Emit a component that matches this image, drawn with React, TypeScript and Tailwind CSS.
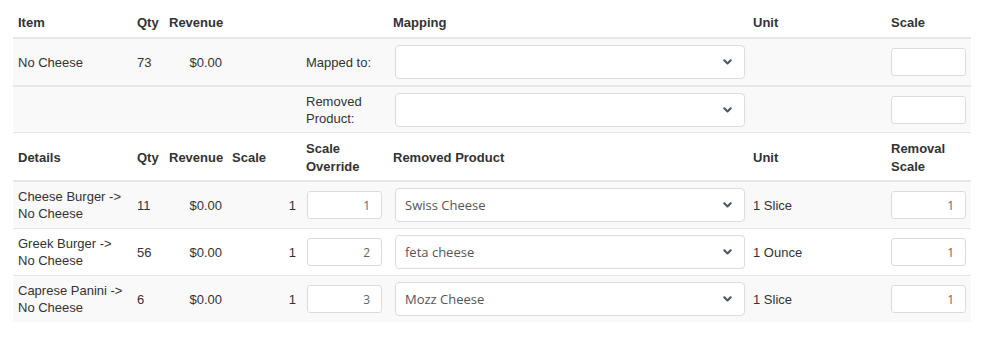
import React from "react";

const COLS = "grid grid-cols-[119px_32px_63px_74px_87px_360px_138px_85px]";

function Chevron() {
  return (
    <svg width="9" height="6" viewBox="0 0 9 6" className="absolute right-[12px] top-1/2 -translate-y-1/2">
      <path d="M1.3 1.3 L4.5 4.5 L7.7 1.3" fill="none" stroke="#4f5563" strokeWidth="2.1" strokeLinecap="round" strokeLinejoin="round" />
    </svg>
  );
}

function Select({ value }: { value?: string }) {
  return (
    <div className="relative ml-[7px] w-[350px] h-[34px] bg-white border border-[#dcdcdc] rounded-[4px] flex items-center pl-[9px] text-[13px] text-[#555] font-['Open_Sans',sans-serif]">
      {value ?? ""}
      <Chevron />
    </div>
  );
}

function NumInput({ value }: { value?: string }) {
  return (
    <div className="w-[75px] h-[28px] bg-white border border-[#dcdcdc] rounded-[3px] flex items-center justify-end pr-[11px] text-[12px] text-[#666] font-['Open_Sans',sans-serif]">
      {value ?? ""}
    </div>
  );
}

const rows = [
  { a: "Cheese Burger ->", qty: "11", ov: "1", prod: "Swiss Cheese", unit: "1 Slice", bg: "bg-[#f9f9f9]" },
  { a: "Greek Burger ->", qty: "56", ov: "2", prod: "feta cheese", unit: "1 Ounce", bg: "bg-white" },
  { a: "Caprese Panini ->", qty: "6", ov: "3", prod: "Mozz Cheese", unit: "1 Slice", bg: "bg-[#f9f9f9]" },
];

export default function App() {
  return (
    <div className="w-[983px] h-[342px] bg-white font-['Liberation_Sans',Arial,sans-serif] text-[13px] leading-[17px] text-[#333]">
      <div className="ml-[13px] w-[958px]">
        {/* Header 1 */}
        <div className={`${COLS} h-[39px] items-end pb-[6px] border-b-2 border-[#e4e7eb] font-bold`}>
          <div className="pl-[5px]">Item</div>
          <div className="pl-[5px]">Qty</div>
          <div className="pl-[5px]">Revenue</div>
          <div />
          <div />
          <div className="pl-[5px]">Mapping</div>
          <div className="pl-[5px]">Unit</div>
          <div className="pl-[5px]">Scale</div>
        </div>
        {/* Row 1 */}
        <div className={`${COLS} h-[48px] items-center bg-[#f9f9f9] border-b-2 border-[#e4e7eb]`}>
          <div className="pl-[5px]">No Cheese</div>
          <div className="pl-[5px]">73</div>
          <div className="pr-[5px] text-right">$0.00</div>
          <div />
          <div className="pl-[5px]">Mapped to:</div>
          <div><Select /></div>
          <div />
          <div className="pl-[5px]"><NumInput /></div>
        </div>
        {/* Row 2 */}
        <div className={`${COLS} h-[46px] items-center bg-[#f9f9f9] border-b border-[#e4e7eb]`}>
          <div />
          <div />
          <div />
          <div />
          <div className="pl-[5px]">Removed<br />Product:</div>
          <div><Select /></div>
          <div />
          <div className="pl-[5px]"><NumInput /></div>
        </div>
        {/* Header 2 */}
        <div className={`${COLS} h-[49px] items-center pt-[2px] border-b-2 border-[#e4e7eb] font-bold`}>
          <div className="pl-[5px]">Details</div>
          <div className="pl-[5px]">Qty</div>
          <div className="pl-[5px]">Revenue</div>
          <div className="pl-[5px]">Scale</div>
          <div className="pl-[5px] leading-[18px]">Scale<br />Override</div>
          <div className="pl-[5px]">Removed Product</div>
          <div className="pl-[5px]">Unit</div>
          <div className="pl-[5px] leading-[18px]">Removal<br />Scale</div>
        </div>
        {rows.map((r, i) => (
          <div
            key={i}
            className={`${COLS} ${i < 2 ? "h-[47px] border-b border-[#e4e7eb]" : "h-[46px]"} items-center ${r.bg}`}
          >
            <div className="pl-[5px]">{r.a}<br />No Cheese</div>
            <div className="pl-[5px]">{r.qty}</div>
            <div className="pr-[5px] text-right">$0.00</div>
            <div className="pr-[5px] text-right">1</div>
            <div className="pl-[6px]"><NumInput value={r.ov} /></div>
            <div><Select value={r.prod} /></div>
            <div className="pl-[5px]">{r.unit}</div>
            <div className="pl-[5px]"><NumInput value="1" /></div>
          </div>
        ))}
      </div>
    </div>
  );
}
